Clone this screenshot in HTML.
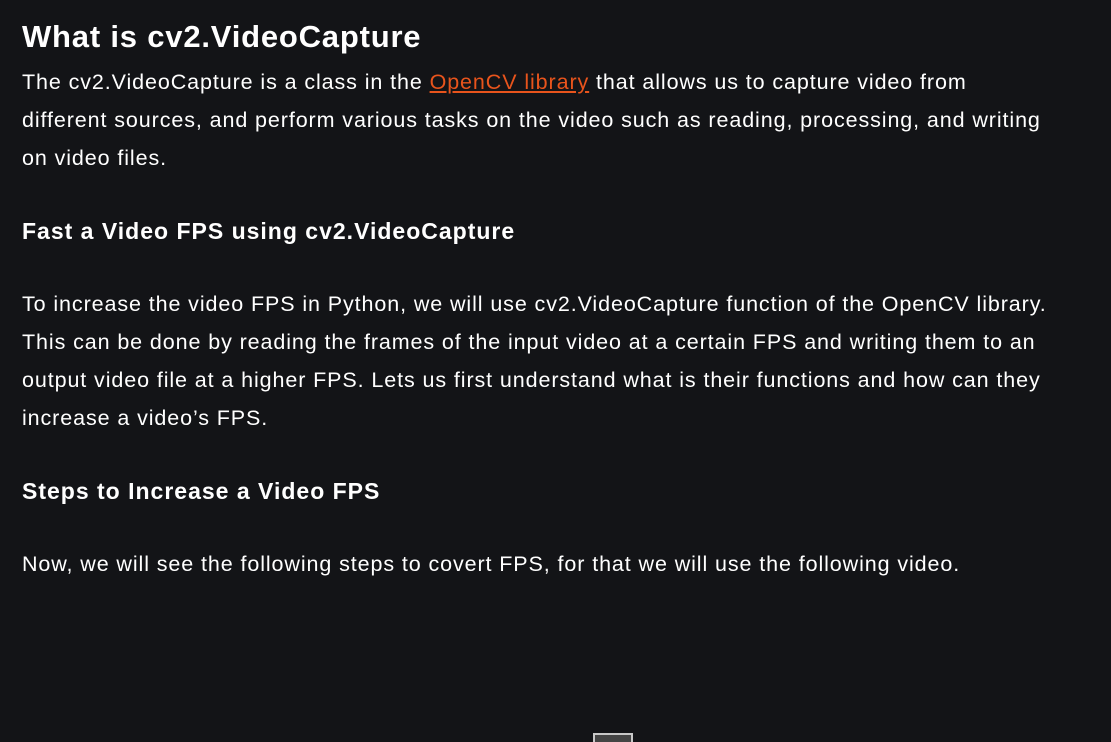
<!DOCTYPE html>
<html><head><style>
html,body{margin:0;padding:0;background:#131417;width:1111px;height:742px;overflow:hidden}
body{font-family:"Liberation Sans",sans-serif;color:#fff;position:relative}
.l{position:absolute;left:22px;white-space:nowrap;font-size:21.5px;letter-spacing:0.9px;line-height:38px}
h1,h3{position:absolute;left:22px;margin:0;white-space:nowrap;font-weight:bold}
h1{font-size:31px;top:17px;line-height:40px;letter-spacing:0.8px}
h3{font-size:23px;line-height:30px;letter-spacing:1px}
a{color:#e8541c;text-decoration:underline}
.box{position:absolute;left:593px;top:733px;width:36px;height:12px;border:2px solid #c8c8c8;background:#444}
</style></head><body>
<h1>What is cv2.VideoCapture</h1>
<div class="l" style="top:63px">The cv2.VideoCapture is a class in the <a>OpenCV library</a> that allows us to capture video from</div>
<div class="l" style="top:101px">different sources, and perform various tasks on the video such as reading, processing, and writing</div>
<div class="l" style="top:139px">on video files.</div>
<h3 style="top:216px">Fast a Video FPS using cv2.VideoCapture</h3>
<div class="l" style="top:285px">To increase the video FPS in Python, we will use cv2.VideoCapture function of the OpenCV library.</div>
<div class="l" style="top:323px">This can be done by reading the frames of the input video at a certain FPS and writing them to an</div>
<div class="l" style="top:361px">output video file at a higher FPS. Lets us first understand what is their functions and how can they</div>
<div class="l" style="top:399px">increase a video’s FPS.</div>
<h3 style="top:476px">Steps to Increase a Video FPS</h3>
<div class="l" style="top:545px">Now, we will see the following steps to covert FPS, for that we will use the following video.</div>
<div class="box"></div>
</body></html>
